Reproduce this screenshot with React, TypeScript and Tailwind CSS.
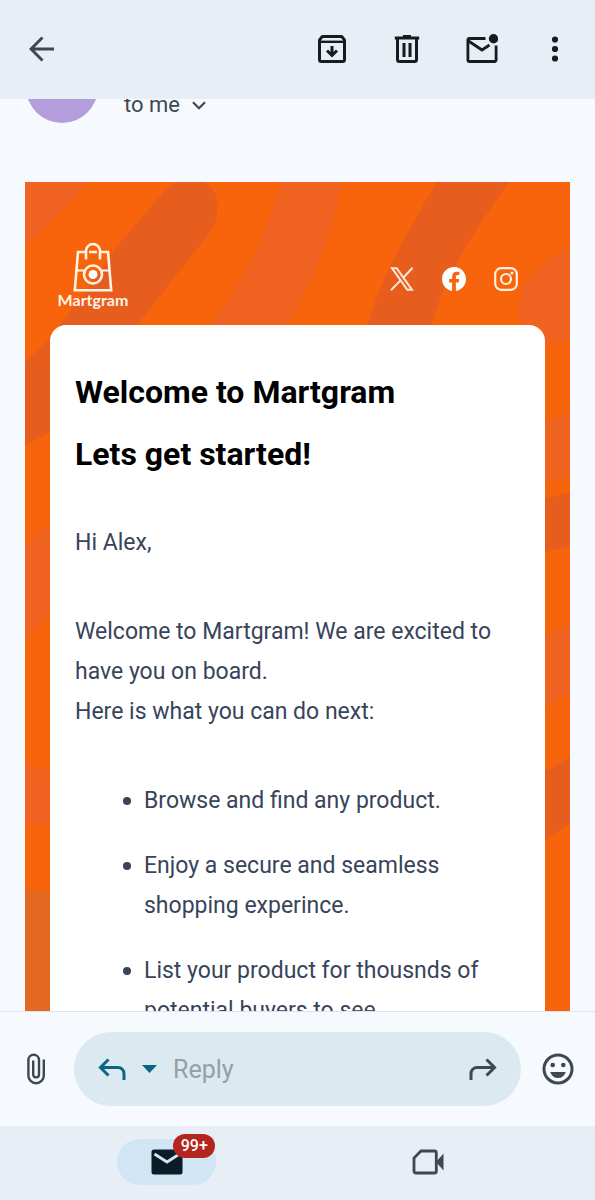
import type { ReactNode } from "react";
import { BsFacebook } from "react-icons/bs";

const steps = [
  "Browse and find any product.",
  "Enjoy a secure and seamless shopping experince.",
  "List your product for thousnds of potential buyers to see.",
];

function IconButton({ label, className = "", children }: { label: string; className?: string; children: ReactNode }) {
  return (
    <button type="button" aria-label={label} className={`flex shrink-0 items-center justify-center ${className}`}>
      {children}
    </button>
  );
}

function TopBar() {
  return (
    <header className="flex h-[99px] shrink-0 items-center justify-between bg-[#e7eef5] pr-1 pb-0.5 pl-4">
      <IconButton label="Back" className="h-12 w-13 text-[#40484f]">
        <svg width="26" height="26" viewBox="0 0 26 26" fill="none" stroke="currentColor" strokeWidth="3">
          <path d="M25 13H3M13.5 1.5 2 13l11.5 11.5" />
        </svg>
      </IconButton>
      <div className="flex items-center text-[#171c21]">
        <IconButton label="Archive" className="h-12 w-[75px]">
          <svg width="28" height="28" viewBox="0 0 28 28" fill="none" stroke="currentColor" strokeWidth="3">
            <path d="M1.500 5v19.500a2 2 0 0 0 2 2h21a2 2 0 0 0 2-2V5l-2.200-2.900a1.500 1.500 0 0 0-1.200-.6H4.900a1.500 1.500 0 0 0-1.200.6L1.500 5Z" />
            <path d="M2 6.800h24" strokeWidth="2.400" />
            <path d="M14 11v9M9 15.500l5 5 5-5" />
          </svg>
        </IconButton>
        <IconButton label="Delete" className="h-12 w-[75px]">
          <svg width="26" height="28" viewBox="0 0 26 28" fill="none" stroke="currentColor" strokeWidth="3">
            <path d="M.8 3h24.400M9 1.500h8" strokeWidth="2.800" />
            <path d="M3.500 3v21.500a2 2 0 0 0 2 2h15a2 2 0 0 0 2-2V3M10 8v14M16 8v14" />
          </svg>
        </IconButton>
        <IconButton label="Mark as unread" className="h-12 w-[75px]">
          <svg width="32" height="30" viewBox="0 0 32 30" fill="none" stroke="currentColor" strokeWidth="2.800">
            <path d="M19.500 4.500H3.400A1.500 1.500 0 0 0 1.900 6v20a1.500 1.500 0 0 0 1.500 1.500h25.200a1.500 1.500 0 0 0 1.500-1.500V11.500" />
            <path d="m2.500 7 13.500 9 7.500-5" />
            <circle cx="27.500" cy="4.800" r="4.700" fill="currentColor" stroke="none" />
          </svg>
        </IconButton>
        <IconButton label="More options" className="h-12 w-[72px]">
          <svg width="8" height="26" viewBox="0 0 8 26" fill="currentColor">
            <circle cx="4" cy="3.500" r="3.100" />
            <circle cx="4" cy="13" r="3.100" />
            <circle cx="4" cy="22.500" r="3.100" />
          </svg>
        </IconButton>
      </div>
    </header>
  );
}

function Stripes() {
  return (
    <svg aria-hidden="true" className="absolute top-0 left-0 w-full" viewBox="0 0 545 830">
      <g fill="#f06321">
        <path d="M0 0h63Q35 34 0 64Z" />
        <path d="M255 0h62Q304 72 262 143H185Q238 72 255 0Z" />
        <path d="M545 66Q493 90 493 125 493 155 522 162 536 162 545 156Z" />
        <path d="M520 240 545 230V295L520 300Z" />
        <path d="M520 455 545 441V511L520 526Z" />
        <path d="M0 363 25 341V431L0 460Z" />
        <path d="M0 581 25 590V643L0 642Z" />
      </g>
      <g fill="#e65d1e">
        <path d="M145 3Q150 0 155 0h24Q193 8 193 27 192 38 186 49L112 143Q76 204 25 250L0 263V181L23 158Q65 104 88 69Z" />
        <path d="M412 0h73Q425 77 406 143H343Q353 98 412 0Z" />
        <path d="M520 317 545 310V364L520 370Z" />
        <path d="M520 590 545 575V641L520 658Z" />
      </g>
      <path d="M0 707 25 710V830H0Z" fill="#e2691f" />
    </svg>
  );
}

function Logo() {
  return (
    <div className="flex w-[72px] flex-col items-center pb-2">
      <svg width="40" height="50" viewBox="0 0 40 50" fill="none" stroke="#fff3e6" strokeWidth="2.600">
        <path d="M13 10H5L1.800 48.200h36.400L35 10h-8" />
        <path d="M13 17.500V9a7 7 0 0 1 14 0v8.500M16 10h8" />
        <path d="M3.500 28.500h8M28.500 28.500h8" strokeWidth="2" />
        <circle cx="20" cy="32.500" r="9" />
        <circle cx="20" cy="32.500" r="4.500" fill="#fff" stroke="none" />
      </svg>
      <span className="font-[Lato,sans-serif] text-base leading-4 font-bold text-[#fff3e6]">Martgram</span>
    </div>
  );
}

function SocialLinks() {
  return (
    <nav aria-label="Social" className="flex items-center gap-7 text-white">
      <a href="#x" aria-label="X">
        <svg width="24" height="24" viewBox="0 0 24 24" fill="none" stroke="#ffe6d0" strokeWidth="2">
          <path d="M2 1.200h4.700l15.300 21.600h-4.700ZM22.500.8 13.300 10.700M10.500 13.400 1 23.300" />
        </svg>
      </a>
      <a href="#facebook" aria-label="Facebook">
        <BsFacebook size={24} />
      </a>
      <a href="#instagram" aria-label="Instagram">
        <svg width="24" height="24" viewBox="0 0 24 24" fill="none" stroke="#fff0e2" strokeWidth="2.200">
          <rect x="1.200" y="1.200" width="21.600" height="21.600" rx="6" />
          <circle cx="12" cy="12" r="5" />
          <circle cx="18" cy="6" r="1.500" fill="#fff0e2" stroke="none" />
        </svg>
      </a>
    </nav>
  );
}

function Email() {
  return (
    <article className="relative mx-[25px] mt-[59px] bg-[#f8640c] px-[25px]">
      <Stripes />
      <div className="relative flex h-[143px] items-center justify-between pt-[50px] pr-[27px] pl-[7px]">
        <Logo />
        <SocialLinks />
      </div>
      <section className="relative rounded-2xl bg-white px-[25px] py-[47px] text-[23px] leading-10 text-[#38445a]">
        <h1 className="mb-[22px] text-[32px] leading-10 font-bold text-black">Welcome to Martgram</h1>
        <h2 className="mb-[49px] text-[32px] leading-10 font-bold text-black">Lets get started!</h2>
        <p>Hi Alex,</p>
        <p className="mt-[49px]">Welcome to Martgram! We are excited to have you on board.</p>
        <p>Here is what you can do next:</p>
        <ul className="mt-[49px] flex flex-col gap-[25px] pl-12">
          {steps.map((step) => (
            <li key={step} className="flex gap-[13px]">
              <span className="mt-4 size-2 shrink-0 rounded-full bg-[#38445a]" />
              <span>{step}</span>
            </li>
          ))}
        </ul>
      </section>
    </article>
  );
}

function ReplyBar() {
  return (
    <form className="flex shrink-0 items-center border-t border-[#dfe3ec] bg-[#f6f9fe] py-5 text-[#40484f]">
      <IconButton label="Attach file" className="h-12 w-[74px]">
        <svg width="20" height="32" viewBox="0 0 20 32" fill="none" stroke="currentColor" strokeWidth="2.400">
          <path d="M16.800 6.500v16a7.700 7.700 0 0 1-15.400 0V7a5.300 5.300 0 0 1 10.600 0v14.500a2.900 2.900 0 0 1-5.800 0V7.500" />
        </svg>
      </IconButton>
      <div className="flex h-[74px] min-w-0 flex-1 items-center rounded-full bg-[#dbe9f1] px-6">
        <IconButton label="Reply" className="text-[#0b6586]">
          <svg width="28" height="22" viewBox="0 0 28 22" fill="none" stroke="currentColor" strokeWidth="3">
            <path d="M10.500 1.500 2.500 9.500l8 8M2.500 9.500H20a6 6 0 0 1 6 6V22" />
          </svg>
        </IconButton>
        <IconButton label="Reply type" className="ml-4 text-[#0b6586]">
          <svg width="15" height="8" viewBox="0 0 15 8" fill="currentColor">
            <path d="M0 0h15L7.500 8Z" />
          </svg>
        </IconButton>
        <input
          aria-label="Reply message"
          placeholder="Reply"
          className="ml-4 min-w-0 flex-1 bg-transparent pt-0.5 text-[25px] text-[#40484f] outline-none placeholder:text-[#93a0a8]"
        />
        <IconButton label="Forward">
          <svg width="28" height="22" viewBox="0 0 28 22" fill="none" stroke="currentColor" strokeWidth="3">
            <path d="m17.500 1.500 8 8-8 8M25.500 9.500H8a6 6 0 0 0-6 6V22" />
          </svg>
        </IconButton>
      </div>
      <IconButton label="Emoji" className="h-12 w-[74px]">
        <svg width="32" height="32" viewBox="0 0 32 32" fill="currentColor">
          <circle cx="16" cy="16" r="14" fill="none" stroke="currentColor" strokeWidth="3" />
          <circle cx="10.700" cy="12" r="2.300" />
          <circle cx="21.300" cy="12" r="2.300" />
          <path d="M8.200 19h15.600q-2.300 6-7.800 6t-7.800-6Z" />
        </svg>
      </IconButton>
    </form>
  );
}

function BottomNav() {
  return (
    <nav className="flex h-[74px] shrink-0 items-center bg-[#e7eef6] px-9 pb-0.5">
      <div className="flex flex-1 justify-center">
        <a href="#mail" aria-label="Mail" className="relative flex h-[46px] w-[99px] items-center justify-center rounded-full bg-[#d2e5f4]">
          <svg width="32" height="26" viewBox="0 0 32 26">
            <rect x=".5" y=".5" width="31" height="25" rx="2.500" fill="#0a1c27" />
            <path d="m3.500 5 12.500 8 12.500-8" fill="none" stroke="#d2e5f4" strokeWidth="2.800" />
          </svg>
          <span className="absolute -top-[5px] left-14 flex h-6 w-[42px] items-center justify-center rounded-full bg-[#b3261e] text-base font-medium text-white">
            99+
          </span>
        </a>
      </div>
      <div className="flex flex-1 justify-center">
        <a href="#meet" aria-label="Meet" className="text-[#40484f]">
          <svg width="32" height="26" viewBox="0 0 32 26" fill="none" stroke="currentColor" strokeWidth="2.800">
            <path d="M9 2h13.500A1.800 1.800 0 0 1 24.300 3.800v18.400A1.800 1.800 0 0 1 22.500 24H3.800A1.800 1.800 0 0 1 2 22.200V9Z" />
            <path d="M24 13 31.500 4.500v17Z" fill="currentColor" stroke="none" />
          </svg>
        </a>
      </div>
    </nav>
  );
}

export default function App() {
  return (
    <div className="flex h-screen flex-col overflow-hidden bg-[#f6f9fe] font-[Roboto,sans-serif]">
      <TopBar />
      <main className="min-h-0 flex-1 overflow-hidden">
        <div className="-mt-12 flex items-end gap-[26px] px-[26px]">
          <div className="size-18 rounded-full bg-[#b39ddb]" />
          <button type="button" className="flex items-center gap-3 pb-1.5 text-[22px] leading-6 text-[#40484f]">
            to me
            <svg width="14" height="9" viewBox="0 0 14 9" fill="none" stroke="currentColor" strokeWidth="2.200">
              <path d="m1 1.200 6 6 6-6" />
            </svg>
          </button>
        </div>
        <Email />
      </main>
      <ReplyBar />
      <BottomNav />
    </div>
  );
}
